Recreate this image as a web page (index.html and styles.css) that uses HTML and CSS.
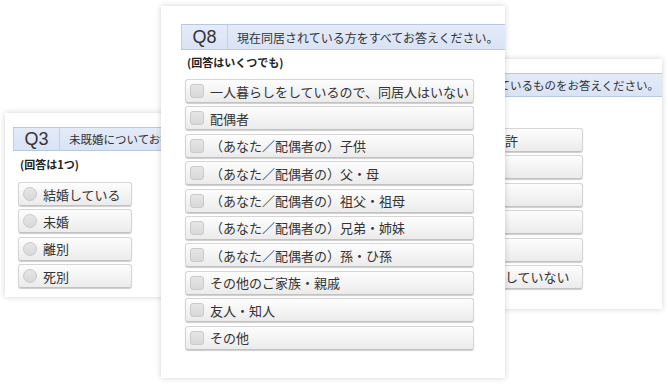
FILE: index.html
```html
<!DOCTYPE html>
<html lang="ja">
<head>
    <meta charset="UTF-8">
    <meta name="viewport" content="width=device-width, initial-scale=1.0">
    <title>アンケート画面</title>
    <link rel="stylesheet" href="styles.css">
</head>
<body>
    <div class="stage">

        <!-- Q3: single answer -->
        <section class="card card-side card-q3">
            <div class="q-head">
                <span class="q-no">Q3</span>
                <span class="q-text">未既婚についてお答えください。</span>
            </div>
            <p class="q-note">(回答は1つ)</p>
            <ul class="opts">
                <li><span class="mark radio"></span>結婚している</li>
                <li><span class="mark radio"></span>未婚</li>
                <li><span class="mark radio"></span>離別</li>
                <li><span class="mark radio"></span>死別</li>
            </ul>
        </section>

        <!-- Q9: behind Q8 on the right -->
        <section class="card card-side card-q9">
            <div class="q-head">
                <span class="q-no">Q9</span>
                <span class="q-text">現在持っているものをお答えください。</span>
            </div>
            <p class="q-note">(回答はいくつでも)</p>
            <ul class="opts">
                <li><span class="mark"></span>自動車運転免許</li>
                <li><span class="mark"></span>持ち家</li>
                <li><span class="mark"></span>ＥＴＣカード</li>
                <li><span class="mark"></span>マイナカード</li>
                <li><span class="mark"></span>自家用車</li>
                <li><span class="mark"></span>いずれも所有していない</li>
            </ul>
        </section>

        <!-- Q8: multiple answers, front -->
        <section class="card card-q8">
            <div class="q-head">
                <span class="q-no">Q8</span>
                <span class="q-text">現在同居されている方をすべてお答えください。</span>
            </div>
            <p class="q-note">(回答はいくつでも)</p>
            <ul class="opts">
                <li><span class="mark"></span>一人暮らしをしているので、同居人はいない</li>
                <li><span class="mark"></span>配偶者</li>
                <li><span class="mark"></span>（あなた／配偶者の）子供</li>
                <li><span class="mark"></span>（あなた／配偶者の）父・母</li>
                <li><span class="mark"></span>（あなた／配偶者の）祖父・祖母</li>
                <li><span class="mark"></span>（あなた／配偶者の）兄弟・姉妹</li>
                <li><span class="mark"></span>（あなた／配偶者の）孫・ひ孫</li>
                <li><span class="mark"></span>その他のご家族・親戚</li>
                <li><span class="mark"></span>友人・知人</li>
                <li><span class="mark"></span>その他</li>
            </ul>
        </section>

    </div>
</body>
</html>
```

FILE: styles.css
```css
* {
    box-sizing: border-box;
}

body {
    margin: 0;
    background-color: #fff;
    font-family: "Noto Sans CJK JP", "Noto Sans", sans-serif;
    color: #333;
}

.stage {
    position: relative;
    width: 668px;
    height: 384px;
}

/* the three survey screens lie over each other like windows */
.card {
    position: absolute;
    background-color: #fff;
    box-shadow: 0 0 6px rgba(0, 0, 0, 0.18);
    overflow: hidden;
}

.card-q3 {
    left: 5px;
    top: 113px;
    width: 200px;
    height: 184px;
    padding: 14px 0 0 8px;
}

.card-q9 {
    left: 389px;
    top: 59px;
    width: 273px;
    height: 250px;
    padding: 14px 0 0 8px;
}

.card-q8 {
    left: 161px;
    top: 6px;
    width: 344px;
    height: 372px;
    padding: 18px 0 0 20px;
    z-index: 2;
}

/* question header bar */
.q-head {
    display: flex;
    height: 26px;
    background: linear-gradient(#e4ebf9, #d9e3f6);
    border-top: 1px solid #b9c7e6;
    border-bottom: 1px solid #b9c7e6;
    white-space: nowrap;
}

.card-side .q-head {
    height: 24px;
}

.q-no {
    flex: none;
    width: 47px;
    display: flex;
    align-items: center;
    justify-content: center;
    border-right: 1px solid #c3cfe9;
    border-left: 1px solid #c3cfe9;
    font-family: "Liberation Sans", Arial, sans-serif;
    font-size: 18px;
    color: #333;
}

.q-text {
    display: flex;
    align-items: center;
    padding-left: 9px;
    font-size: 12px;
    color: #333;
}

.card-side .q-text {
    font-size: 11.5px;
}

.q-note {
    margin: 4px 0 9px 6px;
    font-size: 11px;
    line-height: 16px;
    font-weight: bold;
    color: #222;
}

.card-side .q-note {
    margin: 5px 0 10px 7px;
}

/* answer buttons */
.opts {
    list-style: none;
    margin: 0;
    padding: 0 0 0 4px;
    display: flex;
    flex-direction: column;
    gap: 3.4px;
}

.card-side .opts {
    padding-left: 5px;
}

.opts li {
    display: flex;
    align-items: center;
    gap: 6px;
    width: 289px;
    height: 24px;
    padding-left: 4px;
    border: 1px solid #d5d5d5;
    border-bottom-color: #c2c2c2;
    border-radius: 3px;
    background: linear-gradient(#fdfdfd, #ebebeb);
    box-shadow: 0 1px 1px rgba(0, 0, 0, 0.2);
    font-size: 13px;
    line-height: 1;
    color: #333;
    white-space: nowrap;
}

.card-q3 .opts li {
    width: 114px;
}

.card-q9 .opts li {
    width: 181px;
}

.mark {
    flex: none;
    width: 14px;
    height: 14px;
    border: 1px solid #cacaca;
    border-radius: 3px;
    background: linear-gradient(#e6e6e6, #d8d8d8);
}

.mark.radio {
    border-radius: 50%;
}
```
